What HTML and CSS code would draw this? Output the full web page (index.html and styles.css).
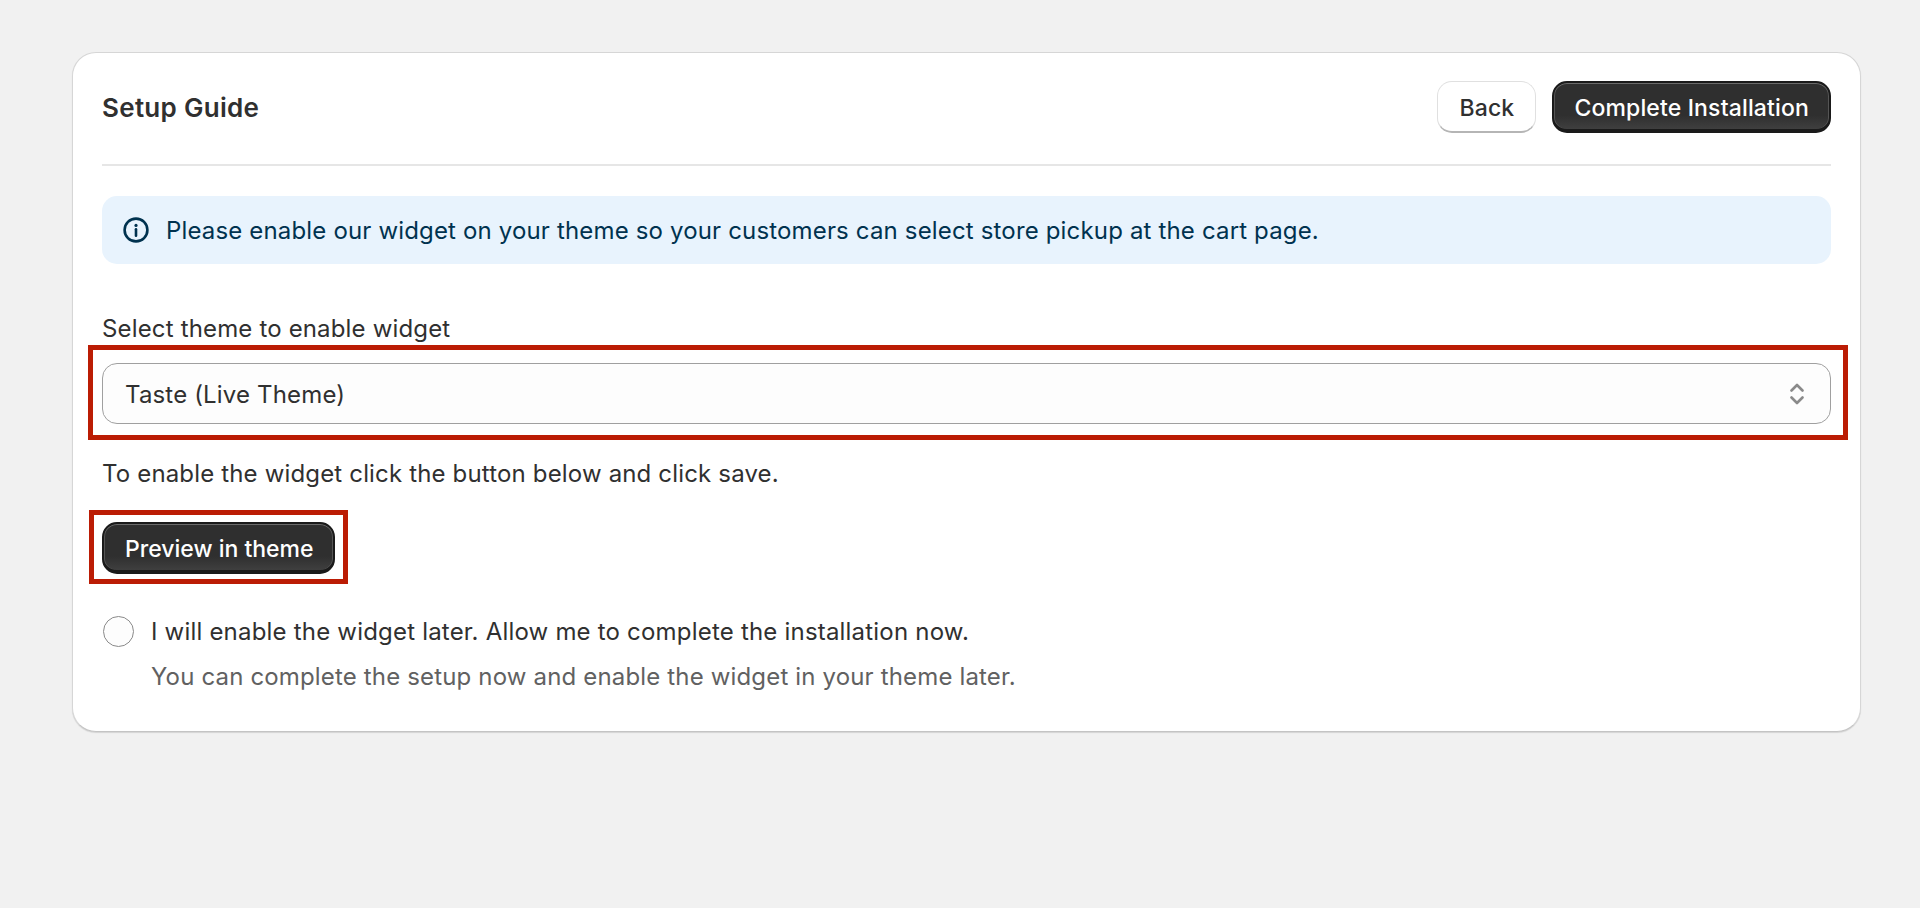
FILE: index.html
```html
<!DOCTYPE html>
<html lang="en">
<head>
<meta charset="utf-8">
<title>Setup Guide</title>
<link rel="stylesheet" href="styles.css">
</head>
<body>
<main class="card">
  <header class="card-header">
    <h1 class="title">Setup Guide</h1>
    <div class="actions">
      <button class="btn btn-plain">Back</button>
      <button class="btn btn-dark btn-complete">Complete Installation</button>
    </div>
  </header>
  <div class="banner">
    <svg class="banner-icon" viewBox="0 0 26 26" width="26" height="26" aria-hidden="true">
      <circle cx="13" cy="13" r="11.4" fill="none" stroke="#00324f" stroke-width="2.6"/>
      <circle cx="13" cy="8.4" r="1.6" fill="#00324f"/>
      <path d="M13 12.2v6.6" stroke="#00324f" stroke-width="2.6" stroke-linecap="round" fill="none"/>
    </svg>
    <p class="banner-text">Please enable our widget on your theme so your customers can select store pickup at the cart page.</p>
  </div>
  <label class="field-label">Select theme to enable widget</label>
  <div class="highlight select">
    <span>Taste (Live Theme)</span>
    <svg class="chevrons" viewBox="0 0 14 24" width="14" height="24" aria-hidden="true">
      <path d="M1.500 8.500 7 3l5.500 5.500M1.500 15.500 7 21l5.500-5.500" fill="none" stroke="#8a8a8a" stroke-width="2.600" stroke-linecap="round" stroke-linejoin="round"/>
    </svg>
  </div>
  <p class="hint">To enable the widget click the button below and click save.</p>
  <div class="preview-row">
    <button class="highlight btn btn-dark btn-preview">Preview in theme</button>
  </div>
  <div class="radio-row">
    <span class="radio"></span>
    <div class="radio-text">
      <div class="radio-label">I will enable the widget later. Allow me to complete the installation now.</div>
      <div class="radio-help">You can complete the setup now and enable the widget in your theme later.</div>
    </div>
  </div>
</main>
</body>
</html>
```
FILE: styles.css
```css
* { box-sizing: border-box; }
html, body { margin: 0; height: 100%; }
body {
  background: #f1f1f1;
  padding: 52px 59px 0 72px;
  font-family: Inter, "Liberation Sans", sans-serif;
  font-size: 24px;
  line-height: 32px;
  letter-spacing: .16px;
  color: #303030;
}
.card {
  width: 1789px;
  height: 680px;
  background: #fff;
  border: 1px solid #d6d6d6;
  border-bottom-color: #c4c4c4;
  border-radius: 24px;
  box-shadow: 0 1px 1px rgba(0,0,0,.12);
  padding: 29px 29px 0 29px;
}
.card-header {
  display: flex;
  justify-content: space-between;
  align-items: center;
  height: 84px;
  padding-bottom: 32px;
  border-bottom: 2px solid #e6e6e6;
}
.title { margin: 0; padding-top: 2px; font-size: 26px; font-weight: 600; line-height: 32px; letter-spacing: .3px; }
.actions { display: flex; gap: 16px; }
.btn {
  font: 450 23px/32px Inter, "Liberation Sans", sans-serif;
  height: 52px;
  padding: 3px 21px 0;
  border-radius: 15px;
  letter-spacing: .15px;
  cursor: pointer;
}
.btn-plain {
  background: #fff;
  color: #303030;
  border: 1px solid #e0e0e0;
  border-bottom: 2px solid #b5b5b5;
}
.btn-dark {
  background: linear-gradient(#2f2f2f, #2f2f2f 70%, #3f3f3f);
  color: #fff;
  border: 2px solid #1a1a1a;
  border-bottom-width: 4px;
  box-shadow: inset 0 1px 0 #6a6a6a, inset 1px 0 0 #555, inset -1px 0 0 #555;
}
.btn-complete { padding: 3px 20px 0; }
.btn-preview { padding: 3px 19px 0 21px; letter-spacing: 0; }
.banner {
  display: flex;
  align-items: center;
  gap: 17px;
  height: 68px;
  margin-top: 30px;
  padding: 0 21px;
  background: #e8f3fd;
  border-radius: 15px;
  color: #00324f;
}
.banner-icon { flex: none; }
.banner-text { margin: 0; padding-top: 2px; }
.field-label { display: block; margin-top: 49px; }
.select {
  display: flex;
  align-items: center;
  justify-content: space-between;
  height: 61px;
  margin-top: 18px;
  padding: 2px 26px 0 22px;
  background: #fdfdfd;
  border: 1px solid #a0a0a0;
  border-radius: 15px;
}
.chevrons { margin-top: -2px; }
.highlight { position: relative; }
.highlight::after {
  content: "";
  position: absolute;
  inset: -19px -18px -17px -15px;
  border: 5px solid #bb1c04;
  pointer-events: none;
}
.hint { margin: 34px 0 0; }
.preview-row { display: flex; margin-top: 32px; }
.preview-row .highlight::after { inset: -14px -15px -14px -15px; }
.radio-row { display: flex; gap: 17px; margin-top: 41px; }
.radio {
  flex: none;
  width: 31px;
  height: 31px;
  margin: 1px 0 0 1px;
  background: #fdfdfd;
  border: 1px solid #8a8a8a;
  border-radius: 50%;
}
.radio-text { padding-top: 1px; }
.radio-label { color: #303030; letter-spacing: .2px; }
.radio-help { margin-top: 13px; color: #616161; }
```
